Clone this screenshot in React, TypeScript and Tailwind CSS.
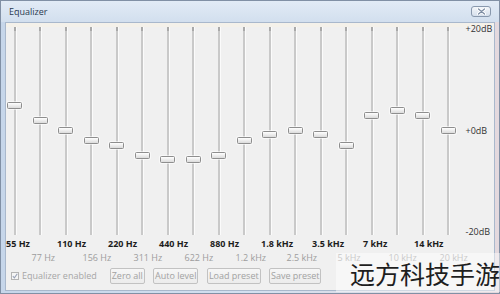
import React from "react";

const bands = [
  "55 Hz", "77 Hz", "110 Hz", "156 Hz", "220 Hz", "311 Hz", "440 Hz", "622 Hz", "880 Hz",
  "1.2 kHz", "1.8 kHz", "2.5 kHz", "3.5 kHz", "5 kHz", "7 kHz", "10 kHz", "14 kHz", "20 kHz",
];
const knobY = [105.5, 120, 130, 140, 145, 155, 159, 159, 155, 140, 134, 130, 134, 145, 115, 110, 115, 130];

function Band({ label, y, i }: { label: string; y: number; i: number }) {
  const even = i % 2 === 0;
  return (
    <div className="flex w-[25.5px] shrink-0 flex-col">
      <div className="relative mt-[4px] h-[208px]">
        <div className="ml-[7.5px] flex h-full w-[3px]">
          <div className="h-full w-[2px] bg-[#c9c9c9]" />
          <div className="h-full w-[1px] bg-[#fbfbfb]" />
        </div>
        <div className="absolute left-[7.5px] top-0 h-[4px] w-[2px] bg-[#a9a9a9]" />
        <div
          className="absolute left-[1px] h-[7px] w-[15px] rounded-[1.5px] border border-[#8e8e8e] bg-gradient-to-b from-[#ffffff] to-[#dcdcdc] shadow-[0_0_0_1px_rgba(255,255,255,0.6)]"
          style={{ top: y - 3.5 - 27 }}
        />
      </div>
      <div className="mt-[3px] h-[12px] whitespace-nowrap text-[9px] leading-[12px] font-bold text-[#1c1c1c]">
        {even ? label : ""}
      </div>
      <div className="mt-[2.5px] h-[10px] whitespace-nowrap text-[9px] leading-[10px] text-[#9d9d9d]">
        {even ? "" : label}
      </div>
    </div>
  );
}

function Btn({ w, children }: { w: string; children: React.ReactNode }) {
  return (
    <div
      className={`${w} flex h-[16px] items-center justify-center rounded-[2px] border border-[#c2c2c2] bg-gradient-to-b from-[#f6f6f6] to-[#ececec] text-[9px] leading-[12px] text-[#a2a2a2] whitespace-nowrap`}
    >
      {children}
    </div>
  );
}

export default function App() {
  return (
    <div className="relative h-[294px] w-[500px] overflow-hidden font-['Open_Sans',sans-serif]">
      <div className="flex h-full w-full flex-col border border-[#8190a5] bg-gradient-to-r from-[#c6d6ea] via-[#d3e0f0] to-[#e4d9de]">
        {/* title bar */}
        <div className="flex h-[21px] shrink-0 items-center justify-between bg-gradient-to-b from-[#e2ebf6] to-[#d2dfee] pl-[8px] pr-[8px]">
          <span className="mt-[1px] text-[9px] leading-[12px] text-[#2a3a50]">Equalizer</span>
          <div className="flex h-[11px] w-[20px] items-center justify-center rounded-[3px] border border-[#8898ad] bg-gradient-to-b from-[#f3f6fa] to-[#d6e0ec]">
            <svg width="9" height="7" viewBox="0 0 9 7">
              <path d="M1.5 1 L7.5 6 M7.5 1 L1.5 6" stroke="#ffffff" strokeWidth="3" strokeLinecap="round" />
              <path d="M1.5 1 L7.5 6 M7.5 1 L1.5 6" stroke="#7d8da3" strokeWidth="1.3" strokeLinecap="round" />
            </svg>
          </div>
        </div>
        {/* client */}
        <div className="mx-[4px] mb-[2px] flex flex-1 flex-col border border-[#a9b8cc] bg-[#f0f0f0]">
          <div className="h-[4px] bg-[#f4f1ea]" />
          <div className="-mt-[4px] flex">
            {bands.map((b, i) => (
              <Band key={b} label={b} y={knobY[i]} i={i} />
            ))}
            <div className="flex h-[215px] w-[28px] flex-col justify-between pl-[0.5px] text-[9px] leading-[12px] text-[#333333]">
              <span>+20dB</span>
              <span>+0dB</span>
              <span>-20dB</span>
            </div>
          </div>
          <div className="mt-[5.5px] flex items-center">
            <div className="ml-[5px] flex h-[8px] w-[8px] items-center justify-center border border-[#b4b4b4] bg-[#f6f6f6]">
              <svg width="6" height="6" viewBox="0 0 6 6">
                <path d="M0.8 3.2 L2.4 4.8 L5.3 0.8" stroke="#9aa3b8" strokeWidth="1.1" fill="none" />
              </svg>
            </div>
            <span className="ml-[3px] text-[9px] leading-[12px] text-[#a6a6a6]">Equalizer enabled</span>
            <div className="ml-[13px] flex gap-[8.5px]">
              <Btn w="w-[35px]">Zero all</Btn>
              <Btn w="w-[45px]">Auto level</Btn>
              <Btn w="w-[54px]">Load preset</Btn>
              <Btn w="w-[52px]">Save preset</Btn>
            </div>
          </div>
        </div>
      </div>
      <div className="absolute left-[336px] top-[253px] flex h-[39px] w-[164px] items-start justify-end bg-white/45 pt-[9px]">
        <span className="font-['Noto_Sans_CJK_SC',sans-serif] text-[25px] leading-[22px] text-[#1e1e1e]">
          远方科技手游
        </span>
      </div>
    </div>
  );
}
